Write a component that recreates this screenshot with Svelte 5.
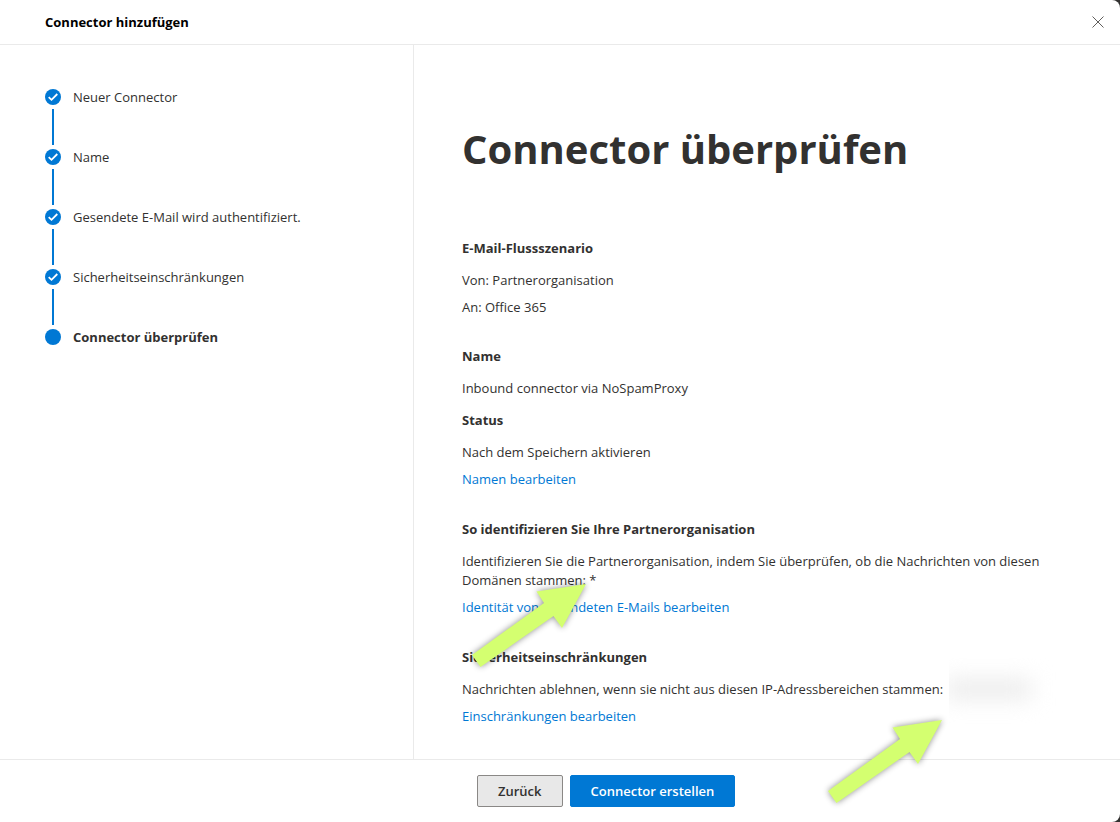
<script lang="ts">
  interface Step {
    label: string;
    done: boolean;
  }

  const steps: Step[] = [
    { label: 'Neuer Connector', done: true },
    { label: 'Name', done: true },
    { label: 'Gesendete E-Mail wird authentifiziert.', done: true },
    { label: 'Sicherheitseinschränkungen', done: true },
    { label: 'Connector überprüfen', done: false }
  ];
</script>

{#snippet arrow(className: string)}
  <svg class="arrow {className}" viewBox="0 0 130 100" aria-hidden="true">
    <path d="M120 8 70.5 15.5 78 27 6 79l8.5 12L87.5 40 96 52z" />
  </svg>
{/snippet}

<div class="dialog" role="dialog" aria-labelledby="dialog-title">
  <header class="dialog-header">
    <h2 class="dialog-title" id="dialog-title">Connector hinzufügen</h2>
    <button class="close" type="button" aria-label="Schließen">
      <svg viewBox="0 0 12 12" aria-hidden="true">
        <path d="M0.5 0.5 11.5 11.5M11.5 0.5 0.5 11.5" />
      </svg>
    </button>
  </header>

  <div class="dialog-body">
    <nav class="sidebar">
      <ol class="steps">
        {#each steps as step}
          <li class="step" class:current={!step.done}>
            <svg class="step-icon" viewBox="0 0 16 16" aria-hidden="true">
              <circle cx="8" cy="8" r="8" />
              {#if step.done}
                <path d="M3.7 8.2 6.5 10.8 12.3 5" />
              {/if}
            </svg>
            <span>{step.label}</span>
          </li>
        {/each}
      </ol>
    </nav>

    <main class="content">
      <h1 class="title">Connector überprüfen</h1>

      <section class="group">
        <h3>E-Mail-Flussszenario</h3>
        <p>Von: Partnerorganisation</p>
        <p>An: Office 365</p>
      </section>

      <section class="group">
        <h3>Name</h3>
        <p>Inbound connector via NoSpamProxy</p>
        <h3 class="sub">Status</h3>
        <p>Nach dem Speichern aktivieren</p>
        <a href="#name">Namen bearbeiten</a>
      </section>

      <section class="group">
        <h3>So identifizieren Sie Ihre Partnerorganisation</h3>
        <p>
          Identifizieren Sie die Partnerorganisation, indem Sie überprüfen, ob die Nachrichten von diesen
          Domänen stammen: *
        </p>
        <a href="#identity">Identität von gesendeten E-Mails bearbeiten</a>
        {@render arrow('to-domains')}
      </section>

      <section class="group">
        <h3>Sicherheitseinschränkungen</h3>
        <p>
          Nachrichten ablehnen, wenn sie nicht aus diesen IP-Adressbereichen stammen:<span class="redacted"></span>
        </p>
        <a href="#restrictions">Einschränkungen bearbeiten</a>
        {@render arrow('to-range')}
      </section>
    </main>
  </div>

  <footer class="dialog-footer">
    <button class="button" type="button">Zurück</button>
    <button class="button primary" type="button">Connector erstellen</button>
  </footer>
</div>

<style>
  :global(body) {
    background: #323130;
  }

  .dialog {
    display: flex;
    flex-direction: column;
    min-height: 100vh;
    background: #fff;
    border-radius: 0 8px 8px 0;
    color: #323130;
    font-family: 'Segoe UI', 'Open Sans', sans-serif;
    font-size: 13px;
    line-height: 19px;
  }

  .dialog-header {
    display: flex;
    align-items: center;
    justify-content: space-between;
    height: 44px;
    padding: 0 12px 0 45px;
    border-bottom: 1px solid #eaeaea;
  }

  .dialog-title {
    margin: 0;
    color: #000;
    font-size: 13px;
    font-weight: 700;
  }

  .close {
    display: flex;
    padding: 4px;
    border: 0;
    background: none;
  }

  .close svg {
    width: 12px;
    height: 12px;
    fill: none;
    stroke: #605e5c;
  }

  .dialog-body {
    display: flex;
    flex: 1;
  }

  .sidebar {
    flex: 0 0 413px;
    box-sizing: border-box;
    padding: 42px 24px 42px 45px;
  }

  .steps {
    display: flex;
    flex-direction: column;
    gap: 40px;
    margin: 0;
    padding: 0;
    list-style: none;
  }

  .step {
    position: relative;
    display: flex;
    align-items: center;
    gap: 12px;
    height: 20px;
  }

  .step:not(:last-child)::after {
    content: '';
    position: absolute;
    top: 22px;
    left: 7px;
    width: 2px;
    height: 36px;
    background: #0078d4;
  }

  .step.current {
    font-weight: 700;
  }

  .step-icon {
    width: 16px;
    height: 16px;
    fill: #0078d4;
  }

  .step-icon path {
    fill: none;
    stroke: #fff;
    stroke-width: 1.8;
  }

  .content {
    flex: 1;
    min-width: 0;
    padding: 76px 48px 32px;
    border-left: 1px solid #eaeaea;
  }

  .title {
    margin: 0 0 62px;
    font-size: 40px;
    font-weight: 700;
    line-height: 56px;
  }

  .group {
    position: relative;
    margin-bottom: 30px;
  }

  .group:last-child {
    margin-bottom: 0;
  }

  h3 {
    margin: 0 0 13px;
    font-size: 13px;
    font-weight: 700;
  }

  h3.sub {
    margin-top: 13px;
  }

  p {
    margin: 0 0 8px;
  }

  p:last-child {
    margin-bottom: 0;
  }

  a {
    display: block;
    padding-bottom: 1px;
    color: #0078d4;
    text-decoration: none;
  }

  /* blurred address, cut off hard where the label ends */
  .redacted {
    position: absolute;
    top: 10px;
    left: 487px;
    width: 110px;
    height: 66px;
    overflow: hidden;
    background: #fff;
  }

  .redacted::before {
    content: '';
    position: absolute;
    top: 21px;
    left: -4px;
    width: 86px;
    height: 20px;
    background: #ebebeb;
    filter: blur(11px);
  }

  .arrow {
    position: absolute;
    z-index: 1;
    width: 130px;
    height: 100px;
    fill: #d4ff70;
    filter: drop-shadow(0 0 3px rgba(0, 0, 0, 0.45));
    pointer-events: none;
  }

  .to-domains {
    top: 56px;
    left: 4px;
  }

  .to-range {
    top: 64px;
    left: 360px;
  }

  .dialog-footer {
    display: flex;
    gap: 7px;
    padding: 15px 24px 15px 477px;
    border-top: 1px solid #eaeaea;
  }

  .button {
    height: 32px;
    padding: 0 20px;
    border: 1px solid #8a8886;
    border-radius: 2px;
    background: #e8e8e8;
    color: #323130;
    font-family: inherit;
    font-size: 13px;
    font-weight: 600;
  }

  .button.primary {
    border-color: #0078d4;
    background: #0078d4;
    color: #fff;
  }
</style>
